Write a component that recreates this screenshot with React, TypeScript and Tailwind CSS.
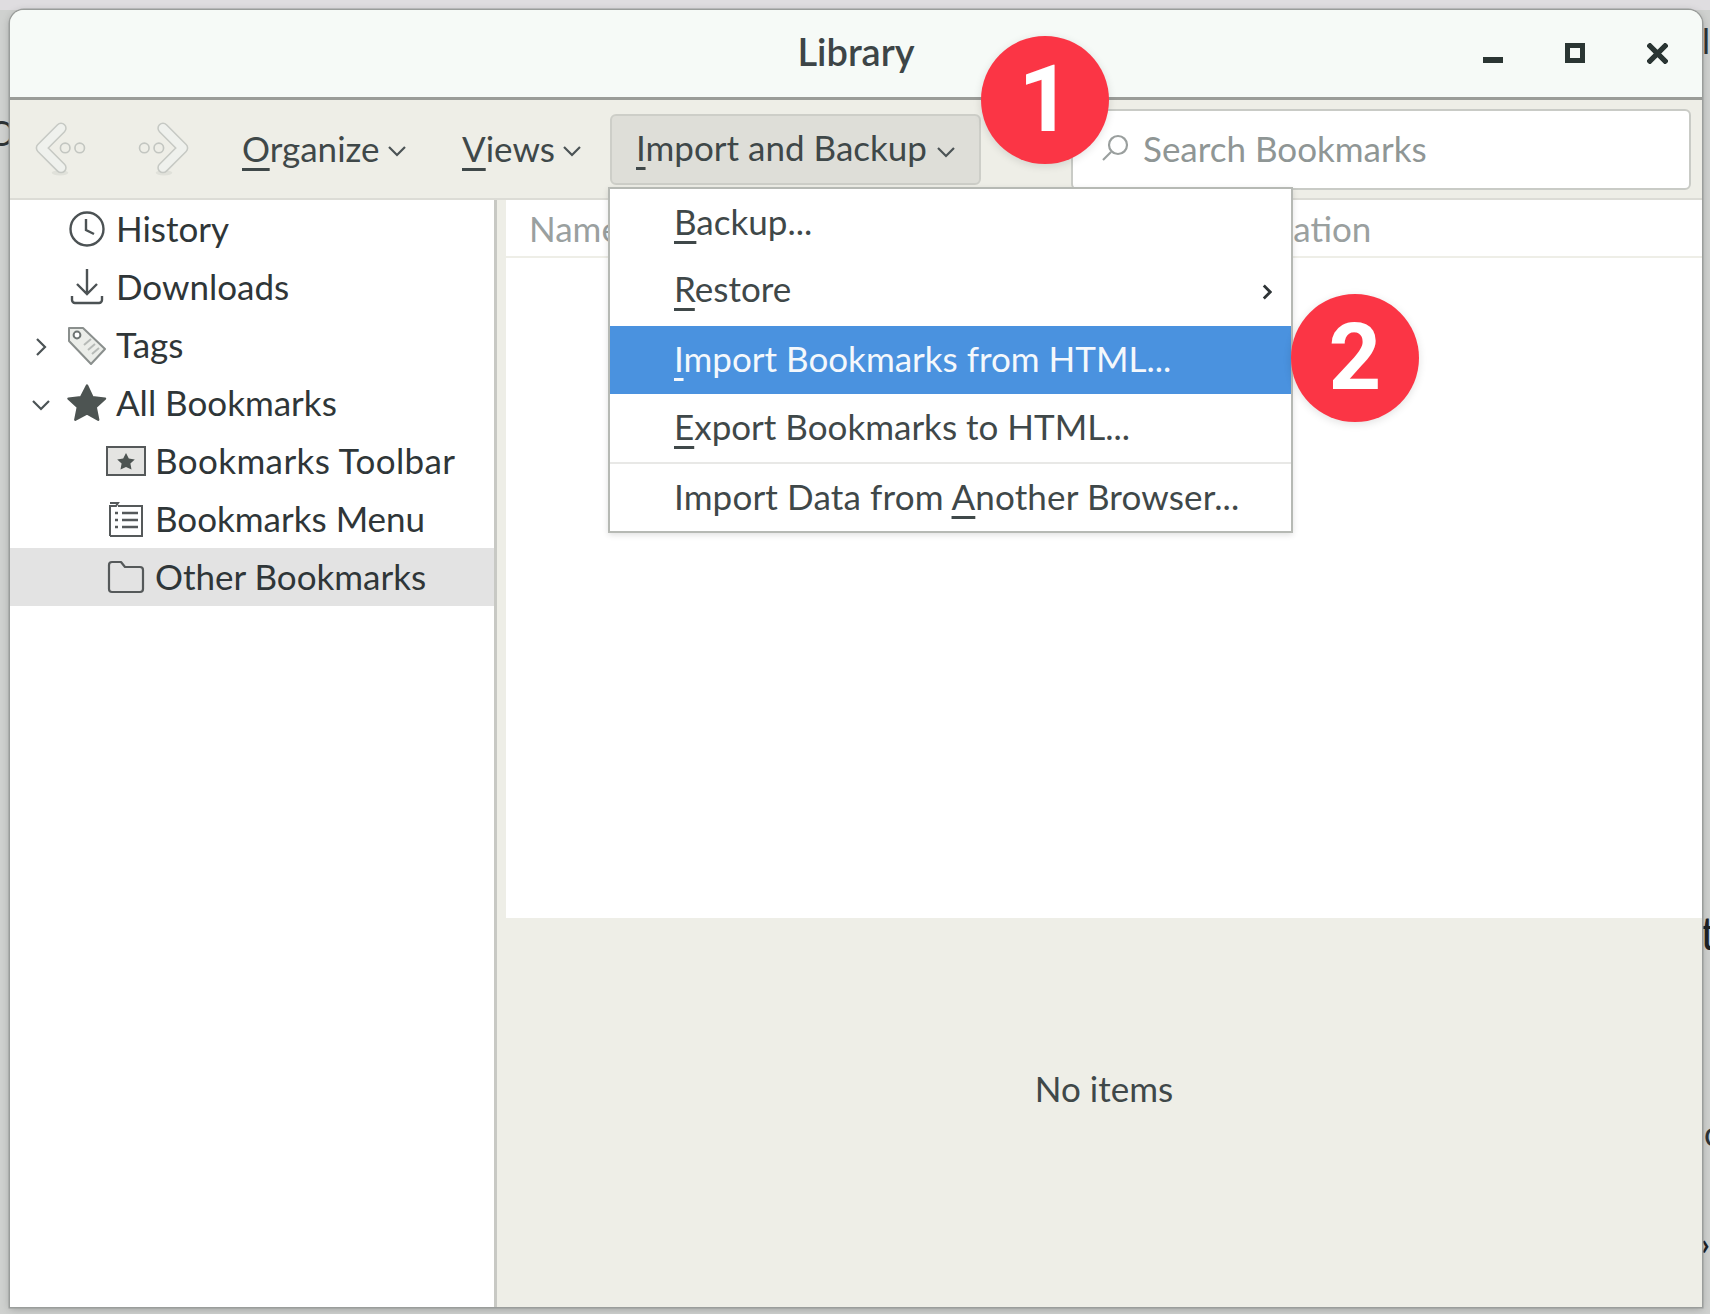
import React from "react";

function U({ children }: { children: React.ReactNode }) {
  return <span className="underline decoration-[2.5px] underline-offset-[6px]">{children}</span>;
}

function Chevron({ className, stroke = "#4b5355", width = 2.2 }: { className: string; stroke?: string; width?: number }) {
  return (
    <svg viewBox="0 0 20 12" className={className} fill="none" stroke={stroke} strokeWidth={width}>
      <path d="M2 2l8 8 8-8" />
    </svg>
  );
}

function NavArrow({ flip }: { flip?: boolean }) {
  return (
    <svg viewBox="0 0 50 54" className={`w-[52px] h-[56px] ${flip ? "-scale-x-100" : ""}`} fill="none" strokeLinecap="round" strokeLinejoin="round">
      <ellipse cx="25" cy="50" rx="8" ry="2.5" fill="#e0e1da" />
      <path d="M26 7 L7 26 L26 45" stroke="#c6c9c4" strokeWidth="11" />
      <path d="M26 7 L7 26 L26 45" stroke="#eff1ed" strokeWidth="8" />
      <circle cx="30" cy="26" r="4.6" stroke="#c3c6c1" strokeWidth="1.6" />
      <circle cx="44" cy="26" r="4.6" stroke="#c3c6c1" strokeWidth="1.6" />
    </svg>
  );
}

function ToolMenu({ children, width, gap }: { children: React.ReactNode; width: string; gap: string }) {
  return (
    <div className={`flex items-center ${width} ${gap} text-[35px] leading-none text-[#3f4849] -mt-[2px]`}>
      <span>{children}</span>
      <Chevron className="w-[20px] h-[12px] mt-[6px] shrink-0" />
    </div>
  );
}

function ClockIcon() {
  return (
    <svg viewBox="0 0 38 38" className="w-[38px] h-[38px]" fill="none" stroke="#4c5254" strokeWidth="2.4">
      <circle cx="19" cy="19" r="16.5" />
      <path d="M18 9v11l8 4" />
    </svg>
  );
}
function DownloadIcon() {
  return (
    <svg viewBox="0 0 38 38" className="w-[38px] h-[38px]" fill="none" stroke="#4c5254" strokeWidth="2.4">
      <path d="M19 1v25M9 16l10 10 10-10M4 28v4a3 3 0 0 0 3 3h24a3 3 0 0 0 3-3v-4" />
    </svg>
  );
}
function TagIcon() {
  return (
    <svg viewBox="0 0 40 40" className="w-[40px] h-[40px]" fill="#ebede9" stroke="#8a8f8d" strokeWidth="2">
      <path d="M2 3h14l22 21-14 15L2 16Z" strokeLinejoin="round" />
      <circle cx="10" cy="10" r="3.4" fill="#fff" stroke="#6e7472" />
      <path d="M17 20l7-6M21 25l7-6M25 29l7-6" stroke="#b6bab7" fill="none" />
    </svg>
  );
}
function StarIcon() {
  return (
    <svg viewBox="0 0 40 40" className="w-[40px] h-[40px]" fill="#4d5452" stroke="#4d5452" strokeWidth="2.4" strokeLinejoin="round">
      <path d="M20 2.5l5.4 11.6 12.6 1.5-9.3 8.6 2.5 12.5L20 30.5 8.3 36.7l2.5-12.5L1.5 15.6l12.6-1.5Z" />
    </svg>
  );
}
function ToolbarIcon() {
  return (
    <svg viewBox="0 0 40 30" className="w-[40px] h-[30px]" fill="#e4e4e2" stroke="#55595a" strokeWidth="2">
      <rect x="1" y="1" width="38" height="28" />
      <path d="M20 7l2.8 5.6 6 .8-4.4 4.2 1.1 6L20 21l-5.5 2.6 1.1-6-4.4-4.2 6-.8Z" fill="#4d5452" stroke="none" />
    </svg>
  );
}
function MenuIcon() {
  return (
    <svg viewBox="0 0 36 36" className="w-[36px] h-[36px]" fill="none" stroke="#55595a" strokeWidth="2">
      <path d="M2 35V5h6l2-3H2M10 5h24v30H2" />
      <path d="M7 12h3M14 12h16M7 19h3M14 19h16M7 26h3M14 26h16" strokeWidth="2.4" />
    </svg>
  );
}
function FolderIcon() {
  return (
    <svg viewBox="0 0 38 34" className="w-[38px] h-[34px]" fill="none" stroke="#55595a" strokeWidth="2.2">
      <path d="M2 5a3 3 0 0 1 3-3h9l4 5h15a3 3 0 0 1 3 3v19a3 3 0 0 1-3 3H5a3 3 0 0 1-3-3Z" strokeLinejoin="round" />
    </svg>
  );
}

function Row({
  icon,
  label,
  indent,
  arrow,
  selected,
  labelClass = "",
}: {
  icon: React.ReactNode;
  label: string;
  indent?: boolean;
  arrow?: React.ReactNode;
  selected?: boolean;
  labelClass?: string;
}) {
  return (
    <div className={`h-[58px] flex items-center text-[35px] leading-none text-[#2f3638] ${selected ? "bg-[#e3e3e3]" : ""}`}>
      <div className="w-[52px] shrink-0 flex justify-center pl-[10px] pt-[4px]">{arrow}</div>
      {indent && <div className="w-[39px] shrink-0" />}
      <div className="w-[50px] shrink-0 flex justify-center mr-[4px]">{icon}</div>
      <span className={`whitespace-nowrap pb-[2px] ${labelClass}`}>{label}</span>
    </div>
  );
}

function MenuItem({ children, active, right, h }: { children: React.ReactNode; active?: boolean; right?: React.ReactNode; h: string }) {
  return (
    <div className={`${h} flex items-center justify-between pl-[64px] pr-[16px] text-[35px] leading-none ${active ? "bg-[#4a92df] text-[#f4f8fc]" : "text-[#3f4849]"}`}>
      <span className="whitespace-nowrap">{children}</span>
      {right}
    </div>
  );
}

function Badge({ n, className }: { n: string; className: string }) {
  return (
    <div className={`absolute w-[128px] h-[128px] rounded-full bg-[#fb3545] text-white flex items-center justify-center font-[Roboto,sans-serif] font-bold text-[92px] leading-none shadow-[0_2px_8px_rgba(0,0,0,0.12)] ${className}`}>
      {n}
    </div>
  );
}

export default function App() {
  return (
    <div className="relative w-[1710px] h-[1314px] overflow-hidden bg-[#cfd1cf] font-[Lato,sans-serif] pt-[10px] pl-[10px]">
      <div className="absolute inset-x-0 top-0 h-[10px] bg-[#dfdde0]" />
      <div className="absolute left-[-12px] top-[116px] text-[34px] leading-none text-[#2e3436]">O</div>
      <div className="absolute left-[1702px] top-[24px] w-[8px] h-[34px] overflow-hidden text-[34px] leading-none text-[#2e3436]">l</div>
      <div className="absolute left-[1700px] top-[910px] text-[46px] leading-none text-[#1e2224]">t</div>
      <div className="absolute left-[1704px] top-[1116px] text-[34px] leading-none text-[#2e3436]">c</div>
      <div className="absolute left-[1701px] top-[1228px] text-[30px] leading-none font-bold text-[#1e2224]">›</div>

      <div className="relative w-[1692px] h-[1297px] flex flex-col rounded-t-[14px] overflow-hidden bg-[#eeeee7] shadow-[0_0_0_1.5px_#9a9d9b,0_2px_8px_rgba(0,0,0,0.25)]">
        {/* Title bar */}
        <div className="relative h-[90px] shrink-0 bg-[#f6faf7] border-b-[3px] border-[#9a9c98] flex items-center justify-center">
          <span className="text-[38px] leading-none font-semibold text-[#3d4547] -mt-[6px]">Library</span>
          <div className="absolute right-[34px] top-[33px] flex items-start gap-[62px]">
            <div className="w-[20px] h-[20px] flex items-end">
              <div className="w-[20px] h-[6px] bg-[#2a3533]" />
            </div>
            <div className="w-[20px] h-[20px] border-[5px] border-[#2a3533]" />
            <svg viewBox="0 0 20 20" className="w-[21px] h-[21px]" stroke="#2a3533" strokeWidth="5">
              <path d="M1 1l18 18M19 1L1 19" />
            </svg>
          </div>
        </div>

        {/* Toolbar */}
        <div className="h-[100px] shrink-0 bg-[#eeeee7] border-b-2 border-[#dcdcd6] flex items-center">
          <div className="ml-[24px] mr-[52px]"><NavArrow /></div>
          <NavArrow flip />
          <div className="ml-[52px]">
            <ToolMenu width="w-[220px]" gap="gap-[7px]"><U>O</U>rganize</ToolMenu>
          </div>
          <ToolMenu width="w-[148px]" gap="gap-[7px]"><U>V</U>iews</ToolMenu>
          <div className="h-[71px] w-[371px] rounded-[6px] bg-[#deded8] border-2 border-[#cdcec8] flex items-center pl-[24px] pb-[4px] gap-[9px] text-[35px] leading-none text-[#3f4849] whitespace-nowrap">
            <span><U>I</U>mport and Backup</span>
            <Chevron className="w-[20px] h-[12px] mt-[10px] shrink-0" />
          </div>
          <div className="ml-[90px] h-[81px] w-[620px] bg-white rounded-[6px] border-2 border-[#c9cbc6] flex items-center pl-[28px] pb-[2px] gap-[14px] text-[35px] leading-none text-[#8f9695]">
            <svg viewBox="0 0 28 28" className="w-[28px] h-[28px]" fill="none" stroke="#9a9f9e" strokeWidth="2.2">
              <circle cx="17" cy="11" r="9" />
              <path d="M10 18l-8 8" />
            </svg>
            <span>Search Bookmarks</span>
          </div>
        </div>

        {/* Body */}
        <div className="flex-1 min-h-0 flex">
          <div className="w-[487px] shrink-0 bg-white border-r-[3px] border-[#c8c9c4] flex flex-col">
            <Row icon={<ClockIcon />} label="History" />
            <Row icon={<DownloadIcon />} label="Downloads" />
            <Row icon={<TagIcon />} label="Tags" arrow={<Chevron className="w-[20px] h-[12px] -rotate-90" />} />
            <Row icon={<StarIcon />} label="All Bookmarks" arrow={<Chevron className="w-[20px] h-[12px]" />} />
            <Row indent icon={<ToolbarIcon />} label="Bookmarks Toolbar" labelClass="tracking-[0.4px]" />
            <Row indent icon={<MenuIcon />} label="Bookmarks Menu" />
            <Row indent selected icon={<FolderIcon />} label="Other Bookmarks" />
          </div>
          <div className="flex-1 min-w-0 ml-[9px] flex flex-col">
            <div className="h-[718px] shrink-0 bg-white">
              <div className="h-[58px] border-b-2 border-[#eeeee7] flex items-center pl-[23px] text-[35px] leading-none text-[#9aa09f]">
                <span className="w-[711px]">Name</span>
                <span>Location</span>
              </div>
            </div>
            <div className="flex-1 flex items-center justify-center text-[35px] leading-none text-[#3f4849] pb-[48px]">
              No items
            </div>
          </div>
        </div>
      </div>

      {/* Dropdown menu */}
      <div className="absolute left-[608px] top-[187px] w-[685px] h-[346px] bg-white border-2 border-[#b6b9b4] shadow-[0_2px_6px_rgba(0,0,0,0.12)] flex flex-col">
        <MenuItem h="h-[69px] pb-[4px]"><U>B</U>ackup...</MenuItem>
        <MenuItem h="h-[68px] pb-[8px]" right={<Chevron className="w-[16px] h-[10px] -rotate-90 mt-[8px]" stroke="#2e3436" width={3.5} />}><U>R</U>estore</MenuItem>
        <MenuItem h="h-[68px] pb-[4px]" active><U>I</U>mport Bookmarks from HTML...</MenuItem>
        <MenuItem h="h-[68px] pb-[4px]"><U>E</U>xport Bookmarks to HTML...</MenuItem>
        <div className="h-[2px] bg-[#e8e8e6]" />
        <MenuItem h="h-[67px] pb-[2px]"><span className="tracking-[0.15px]">Import Data from <U>A</U>nother Browser...</span></MenuItem>
      </div>

      <Badge n="1" className="left-[981px] top-[36px]" />
      <Badge n="2" className="left-[1291px] top-[294px]" />
    </div>
  );
}
